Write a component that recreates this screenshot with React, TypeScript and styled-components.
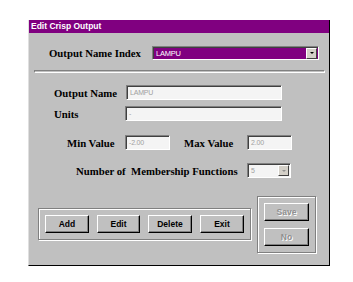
import React from 'react';
import styled, { createGlobalStyle } from 'styled-components';

const GlobalStyle = createGlobalStyle`
    html, body {
        margin: 0;
        padding: 0;
        background: #ffffff;
    }
`;

const Window = styled.div`
    margin: 20px 0 0 28px;
    width: 300px;
    height: 245px;
    background: #c0c0c0;
    border-left: 1px solid #dfdfdf;
    border-right: 1px solid #000000;
    border-bottom: 1px solid #000000;
    display: flex;
    flex-direction: column;
`;

const TitleBar = styled.div`
    height: 13px;
    background: #800080;
    color: #ffffff;
    font: bold 8.5px "Liberation Sans", Arial, sans-serif;
    line-height: 13px;
    padding-left: 2px;
`;

const Row = styled.div<{ $top: number; $left: number }>`
    display: flex;
    align-items: center;
    margin-top: ${p => p.$top}px;
    padding-left: ${p => p.$left}px;
`;

const Label = styled.div<{ $width: number }>`
    flex-shrink: 0;
    width: ${p => p.$width}px;
    font: bold 10.75px "Liberation Serif", "Times New Roman", serif;
    color: #000000;
    white-space: nowrap;
`;

const Field = styled.div<{ $width: number; $purple?: boolean }>`
    flex-shrink: 0;
    box-sizing: border-box;
    width: ${p => p.$width}px;
    height: 15px;
    background: ${p => (p.$purple ? '#800080' : '#f4f4f4')};
    color: ${p => (p.$purple ? '#ffffff' : '#a0a0a0')};
    border-top: 1px solid #808080;
    border-left: 1px solid #808080;
    border-right: 1px solid #ffffff;
    border-bottom: 1px solid #ffffff;
    box-shadow: inset 1px 1px 0 #404040;
    font: ${p => (p.$purple ? 7.5 : 7)}px "Liberation Sans", Arial, sans-serif;
    letter-spacing: -0.2px;
    line-height: 13px;
    padding-left: 3px;
    display: flex;
    align-items: center;
    justify-content: space-between;
    overflow: hidden;
`;

const Arrow = styled.div<{ $disabled?: boolean }>`
    box-sizing: border-box;
    width: 11px;
    height: 11px;
    margin-right: 1px;
    background: #d4d0c8;
    border-top: 1px solid #ffffff;
    border-left: 1px solid #ffffff;
    border-right: 1px solid #404040;
    border-bottom: 1px solid #404040;
    display: flex;
    align-items: center;
    justify-content: center;
    &::after {
        content: '';
        border-left: 2px solid transparent;
        border-right: 2px solid transparent;
        border-top: 2px solid ${p => (p.$disabled ? '#909090' : '#000000')};
    }
`;

const Separator = styled.div`
    margin: 10px 0 0 5px;
    width: 289px;
    height: 1px;
    border-top: 1px solid #808080;
    border-bottom: 1px solid #ffffff;
    border-left: 1px solid #808080;
    border-right: 1px solid #ffffff;
`;

const Bottom = styled.div`
    display: flex;
    align-items: flex-start;
    margin-top: 18px;
    padding-left: 9px;
    gap: 6px;
`;

const GroupBox = styled.div<{ $top: number; $column?: boolean }>`
    box-sizing: border-box;
    margin-top: ${p => p.$top}px;
    border: 1px solid #808080;
    box-shadow: inset 1px 1px 0 #ffffff, 1px 1px 0 #ffffff;
    padding: 6px;
    display: flex;
    flex-direction: ${p => (p.$column ? 'column' : 'row')};
    gap: ${p => (p.$column ? 7 : 8)}px;
`;

const Button = styled.div<{ $disabled?: boolean; $width: number }>`
    box-sizing: border-box;
    width: ${p => p.$width}px;
    height: 18px;
    background: #c0c0c0;
    border-top: 1px solid #ffffff;
    border-left: 1px solid #ffffff;
    border-right: 1px solid #000000;
    border-bottom: 1px solid #000000;
    box-shadow: inset -1px -1px 0 #808080;
    font: bold 8.5px "Liberation Sans", Arial, sans-serif;
    color: ${p => (p.$disabled ? '#909090' : '#000000')};
    text-shadow: ${p => (p.$disabled ? '1px 1px 0 #ffffff' : 'none')};
    display: flex;
    align-items: center;
    justify-content: center;
`;

export default function App() {
    return (
        <>
            <GlobalStyle />
            <Window>
                <TitleBar>Edit Crisp Output</TitleBar>
                <Row $top={13} $left={20}>
                    <Label $width={103}>Output Name Index</Label>
                    <Field $width={167} $purple style={{ height: 14 }}>
                        LAMPU
                        <Arrow />
                    </Field>
                </Row>
                <Separator />
                <Row $top={12} $left={25}>
                    <Label $width={72}>Output Name</Label>
                    <Field $width={156}>LAMPU</Field>
                </Row>
                <Row $top={6} $left={25}>
                    <Label $width={71}>Units</Label>
                    <Field $width={157}>-</Field>
                </Row>
                <Row $top={14} $left={38}>
                    <Label $width={58}>Min Value</Label>
                    <Field $width={45}>-2.00</Field>
                    <Label $width={63} style={{ marginLeft: 14 }}>Max Value</Label>
                    <Field $width={45}>2.00</Field>
                </Row>
                <Row $top={13} $left={47}>
                    <Label $width={171}>Number of&nbsp; Membership Functions</Label>
                    <Field $width={44}>
                        5
                        <Arrow $disabled />
                    </Field>
                </Row>
                <Bottom>
                    <GroupBox $top={12}>
                        <Button $width={44}>Add</Button>
                        <Button $width={43}>Edit</Button>
                        <Button $width={44}>Delete</Button>
                        <Button $width={44}>Exit</Button>
                    </GroupBox>
                    <GroupBox $top={0} $column>
                        <Button $width={45} $disabled>Save</Button>
                        <Button $width={45} $disabled>No</Button>
                    </GroupBox>
                </Bottom>
            </Window>
        </>
    );
}
